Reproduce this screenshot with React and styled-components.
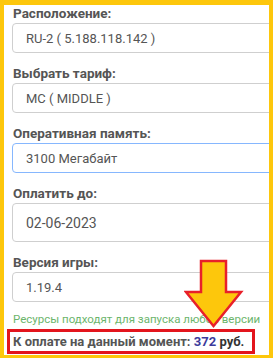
import React from "react";
import styled, { createGlobalStyle } from "styled-components";

const GlobalStyle = createGlobalStyle`
  body {
    margin: 0;
    background: #fff;
    font-family: Roboto, "Liberation Sans", sans-serif;
  }
`;

const fields = [
  { label: "Расположение:", value: "RU-2 ( 5.188.118.142 )" },
  { label: "Выбрать тариф:", value: "MC ( MIDDLE )" },
  { label: "Оперативная память:", value: "3100 Мегабайт", focused: true },
  { label: "Оплатить до:", value: "02-06-2023", tall: true },
  { label: "Версия игры:", value: "1.19.4" },
];

const App = () => {
  return (
    <>
      <GlobalStyle />
      <Frame>
        {fields.map((f) => (
          <Group key={f.label}>
            <Label>{f.label}</Label>
            <Field
              readOnly
              value={f.value}
              $focused={f.focused}
              $tall={f.tall}
            />
          </Group>
        ))}
        <Hint>Ресурсы подходят для запуска любой версии</Hint>
        <Total>
          К оплате на данный момент:&nbsp;<Sum>372</Sum>&nbsp;<Rub>руб.</Rub>
        </Total>
        <Arrow width="60" height="70" viewBox="0 0 60 70">
          <polygon
            points="17,2 42,2 42,33 57,33 29.5,67 2,33 17,33"
            fill="#fdc70c"
            stroke="#e8202a"
            strokeWidth="2.5"
            strokeLinejoin="miter"
          />
        </Arrow>
      </Frame>
    </>
  );
};

const Frame = styled.div`
  position: relative;
  box-sizing: border-box;
  width: 273px;
  height: 358px;
  border: solid #fdc70c;
  border-width: 5px 4px 3px 4px;
  padding-left: 8px;
  overflow: hidden;
`;

const Group = styled.div`
  margin-bottom: 12px;
`;

const Label = styled.div`
  font-size: 13.5px;
  font-weight: 700;
  line-height: 16px;
  color: #555;
  margin: 0 0 2px 1px;
  white-space: nowrap;
`;

const Field = styled.input`
  display: block;
  box-sizing: border-box;
  width: 300px;
  height: ${(p) => (p.$tall ? "39px" : "30px")};
  padding: 0 13px;
  border: 1px solid ${(p) => (p.$focused ? "#86b7fe" : "#cfcfcf")};
  border-radius: 4px;
  background: #fff;
  font-family: inherit;
  font-size: ${(p) => (p.$tall ? "14px" : "13px")};
  color: #555;
  outline: none;
`;

const Hint = styled.div`
  font-size: 11.5px;
  line-height: 14px;
  color: #6cb56c;
  margin: -2px 0 3px 1px;
  white-space: nowrap;
`;

const Total = styled.div`
  box-sizing: border-box;
  display: flex;
  align-items: center;
  width: 248px;
  height: 25px;
  margin-left: -5px;
  padding-left: 3px;
  border: 3px solid #e3151d;
  font-size: 13px;
  font-weight: 700;
  color: #555;
  white-space: nowrap;
`;

const Sum = styled.span`
  color: #3b3b9b;
`;

const Rub = styled.span`
  color: #333;
`;

const Arrow = styled.svg`
  position: absolute;
  left: 180px;
  top: 254px;
`;

export default App;
